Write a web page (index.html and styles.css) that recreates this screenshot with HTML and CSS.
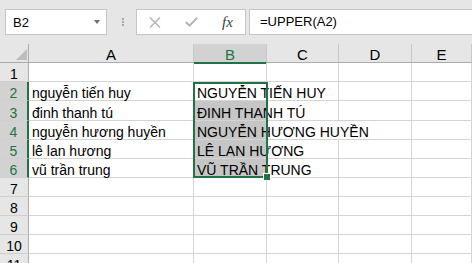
FILE: index.html
```html
<!DOCTYPE html>
<html lang="vi">
<head>
    <meta charset="UTF-8">
    <title>UPPER</title>
    <link rel="stylesheet" href="styles.css">
</head>
<body>

<!-- Thanh công thức -->
<div class="formula-bar">
    <div class="name-box">
        <span>B2</span>
        <span class="drop-arrow"></span>
    </div>
    <div class="grip"><i></i><i></i><i></i></div>
    <div class="fx-box">
        <svg class="btn-cancel" width="12" height="11" viewBox="0 0 12 11">
            <path d="M1 0.5 L11 10.5 M11 0.5 L1 10.5" stroke="#b4b4b4" stroke-width="1.4" fill="none"/>
        </svg>
        <svg class="btn-enter" width="13" height="10" viewBox="0 0 13 10">
            <path d="M0.8 5 L4.5 8.6 L12.2 0.8" stroke="#b4b4b4" stroke-width="2" fill="none"/>
        </svg>
        <span class="fx">fx</span>
    </div>
    <div class="formula-input">=UPPER(A2)</div>
</div>

<!-- Bảng tính -->
<div class="sheet">
    <div class="cell corner">
        <svg width="11" height="11" viewBox="0 0 11 11"><polygon points="11,0 11,11 0,11" fill="#bdbdbd"/></svg>
    </div>
    <div class="cell col-head">A</div>
    <div class="cell col-head active">B</div>
    <div class="cell col-head">C</div>
    <div class="cell col-head">D</div>
    <div class="cell col-head">E</div>

    <div class="cell row-head">1</div>
    <div class="cell"></div><div class="cell"></div><div class="cell"></div><div class="cell"></div><div class="cell"></div>

    <div class="cell row-head active">2</div>
    <div class="cell">nguyễn tiến huy</div>
    <div class="cell">NGUYỄN TIẾN HUY</div>
    <div class="cell"></div><div class="cell"></div><div class="cell"></div>

    <div class="cell row-head active">3</div>
    <div class="cell">đinh thanh tú</div>
    <div class="cell picked">ĐINH THANH TÚ</div>
    <div class="cell"></div><div class="cell"></div><div class="cell"></div>

    <div class="cell row-head active">4</div>
    <div class="cell">nguyễn hương huyền</div>
    <div class="cell picked">NGUYỄN HƯƠNG HUYỀN</div>
    <div class="cell spill"></div><div class="cell"></div><div class="cell"></div>

    <div class="cell row-head active">5</div>
    <div class="cell">lê lan hương</div>
    <div class="cell picked">LÊ LAN HƯƠNG</div>
    <div class="cell"></div><div class="cell"></div><div class="cell"></div>

    <div class="cell row-head active">6</div>
    <div class="cell">vũ trần trung</div>
    <div class="cell picked">VŨ TRẦN TRUNG</div>
    <div class="cell"></div><div class="cell"></div><div class="cell"></div>

    <div class="cell row-head">7</div>
    <div class="cell"></div><div class="cell"></div><div class="cell"></div><div class="cell"></div><div class="cell"></div>
    <div class="cell row-head">8</div>
    <div class="cell"></div><div class="cell"></div><div class="cell"></div><div class="cell"></div><div class="cell"></div>
    <div class="cell row-head">9</div>
    <div class="cell"></div><div class="cell"></div><div class="cell"></div><div class="cell"></div><div class="cell"></div>
    <div class="cell row-head">10</div>
    <div class="cell"></div><div class="cell"></div><div class="cell"></div><div class="cell"></div><div class="cell"></div>
    <div class="cell row-head">11</div>
    <div class="cell"></div><div class="cell"></div><div class="cell"></div><div class="cell"></div><div class="cell"></div>

    <!-- Vùng chọn B2:B6 -->
    <div class="selection"></div>
    <div class="fill-handle"></div>
</div>

</body>
</html>
```

FILE: styles.css
```css
body {
    margin: 0;
    background: #ffffff;
    color: #000000;
    font-family: "Liberation Sans", Arial, sans-serif;
    overflow: hidden;
}

/* Thanh công thức */
.formula-bar {
    display: flex;
    align-items: flex-start;
    height: 44px;
    padding-top: 9px;
    box-sizing: border-box;
    background: #e6e6e6;
}
.name-box {
    box-sizing: border-box;
    display: flex;
    align-items: center;
    justify-content: space-between;
    width: 102px;
    height: 26px;
    margin-left: 5px;
    padding: 0 6px 0 7px;
    background: #ffffff;
    border: 1px solid #c6c6c6;
    font-size: 13px;
}
.drop-arrow {
    width: 0;
    height: 0;
    border-left: 3.5px solid transparent;
    border-right: 3.5px solid transparent;
    border-top: 4px solid #707070;
}
.grip {
    display: flex;
    flex-direction: column;
    gap: 1px;
    margin: 9px 0 0 15px;
}
.grip i {
    display: block;
    width: 2px;
    height: 2px;
    background: #a8a8a8;
}
.fx-box {
    box-sizing: border-box;
    display: flex;
    align-items: center;
    width: 110px;
    height: 26px;
    margin-left: 12px;
    padding-left: 12px;
    background: #ffffff;
    border: 1px solid #c6c6c6;
}
.btn-enter {
    margin-left: 24px;
}
.fx {
    margin-left: 24px;
    font-family: "Liberation Serif", serif;
    font-style: italic;
    font-size: 15px;
    color: #3c3c3c;
}
.formula-input {
    box-sizing: border-box;
    flex: 1;
    height: 26px;
    margin-left: 3px;
    padding-left: 10px;
    line-height: 24px;
    background: #ffffff;
    border: 1px solid #c6c6c6;
    border-right: none;
    font-size: 13px;
}

/* Bảng tính */
.sheet {
    position: relative;
    display: grid;
    grid-template-columns: 29px 165px 73px 72px 73px 1fr;
    grid-template-rows: 19px 19px 19px 20px repeat(8, 19px);
}
.cell {
    box-sizing: border-box;
    display: flex;
    align-items: flex-end;
    padding: 0 3px;
    border-right: 1px solid #d4d4d4;
    border-bottom: 1px solid #d4d4d4;
    font-size: 14px;
    line-height: 14px;
    white-space: nowrap;
}
.cell.spill {
    border-right-color: transparent;
}
.cell.picked {
    background: #c6c6c6;
}
.corner {
    justify-content: flex-end;
    padding: 0 1px 2px 0;
    background: #e6e6e6;
    border-right-color: #ababab;
    border-bottom-color: #ababab;
}
.corner svg {
    display: block;
}
.col-head {
    justify-content: center;
    background: #e6e6e6;
    border-right-color: #c8c8c8;
    border-bottom-color: #ababab;
    font-size: 15px;
}
.col-head.active {
    background: #d2d2d2;
    color: #217346;
    border-bottom-color: #217346;
    box-shadow: 0 1px 0 #217346;
}
.row-head {
    justify-content: center;
    background: #e6e6e6;
    border-right-color: #ababab;
    border-bottom-color: #cfcfcf;
}
.row-head.active {
    background: #d2d2d2;
    color: #217346;
    border-right: 2px solid #217346;
}

.selection {
    position: absolute;
    left: 193px;
    top: 38px;
    width: 75px;
    height: 96px;
    box-sizing: border-box;
    border: 2px solid #217346;
}
.fill-handle {
    position: absolute;
    left: 263px;
    top: 129px;
    width: 6px;
    height: 6px;
    background: #217346;
    border: 1px solid #ffffff;
}
```
